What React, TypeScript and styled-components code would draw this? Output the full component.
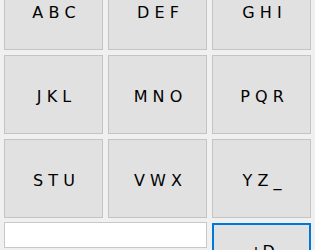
import React from 'react';
import styled, { createGlobalStyle } from 'styled-components';

const GlobalStyle = createGlobalStyle`
  html, body {
    margin: 0;
    padding: 0;
    background: #f0f0f0;
    overflow: hidden;
  }
  body {
    font-family: "DejaVu Sans", Verdana, sans-serif;
  }
`;

const Pad = styled.div`
  display: grid;
  grid-template-columns: 99px 99px 99px;
  grid-template-rows: 79px 79px 79px 54px;
  column-gap: 5px;
  row-gap: 5px;
  margin-top: -29px;
  padding-left: 4px;
`;

const Key = styled.button<{ $default?: boolean }>`
  display: flex;
  align-items: center;
  justify-content: center;
  margin: 0;
  padding: 3px 0 0 1px;
  background: #e1e1e1;
  border: ${p => (p.$default ? '2px solid #0078d7' : '1px solid #c4c4c4')};
  border-radius: 0;
  font-family: "DejaVu Sans", Verdana, sans-serif;
  font-size: 16px;
  color: #000;
  white-space: pre;
`;

const Entry = styled.input`
  grid-column: 1 / span 2;
  align-self: start;
  box-sizing: border-box;
  height: 26px;
  margin: 0;
  margin-top: -1px;
  background: #fff;
  border: 1px solid #c8c8c8;
  border-radius: 0;
  outline: none;
  font-family: "DejaVu Sans", Verdana, sans-serif;
  font-size: 13px;
`;

const labels = ['A B C', 'D E F', 'G H I', 'J K L', 'M N O', 'P Q R', 'S T U', 'V W X', 'Y Z _'];

export default function App() {
  return (
    <>
      <GlobalStyle />
      <Pad>
        {labels.map(l => (
          <Key key={l}>{l}</Key>
        ))}
        <Entry />
        <Key $default>+D</Key>
      </Pad>
    </>
  );
}
